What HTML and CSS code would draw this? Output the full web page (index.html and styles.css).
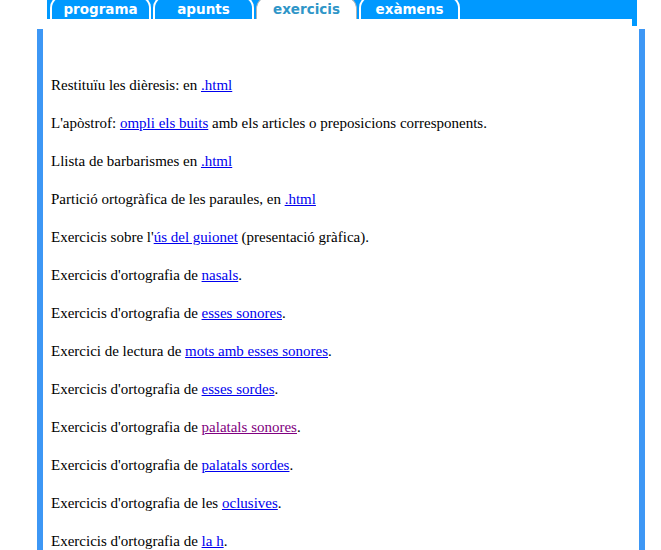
FILE: index.html
```html
<!DOCTYPE html>
<html lang="ca">
<head>
<meta charset="utf-8">
<title>exercicis</title>
<link rel="stylesheet" href="styles.css">
</head>
<body>
<div class="header">
  <nav class="topbar">
    <a class="tab">programa</a>
    <a class="tab">apunts</a>
    <a class="tab active">exercicis</a>
    <a class="tab">exàmens</a>
  </nav>
  <div class="tail"></div>
</div>
<main class="content">
  <p>Restituïu les dièresis: en <a href="#">.html</a></p>
  <p>L'apòstrof: <a href="#">ompli els buits</a> amb els articles o preposicions corresponents.</p>
  <p>Llista de barbarismes en <a href="#">.html</a></p>
  <p>Partició ortogràfica de les paraules, en <a href="#">.html</a></p>
  <p>Exercicis sobre l'<a href="#">ús del guionet</a> (presentació gràfica).</p>
  <p>Exercicis d'ortografia de <a href="#">nasals</a>.</p>
  <p>Exercicis d'ortografia de <a href="#">esses sonores</a>.</p>
  <p>Exercici de lectura de <a href="#">mots amb esses sonores</a>.</p>
  <p>Exercicis d'ortografia de <a href="#">esses sordes</a>.</p>
  <p>Exercicis d'ortografia de <a class="visited" href="#">palatals sonores</a>.</p>
  <p>Exercicis d'ortografia de <a href="#">palatals sordes</a>.</p>
  <p>Exercicis d'ortografia de les <a href="#">oclusives</a>.</p>
  <p>Exercicis d'ortografia de <a href="#">la h</a>.</p>
</main>
</body>
</html>
```
FILE: styles.css
```css
html, body {
  margin: 0;
  padding: 0;
  background: #ffffff;
}

body {
  font-family: "Liberation Serif", "Times New Roman", serif;
  font-size: 15px;
  color: #000000;
  overflow: hidden;
}

.header {
  margin-left: 47px;
  width: 590px;
  display: flex;
  flex-direction: column;
}

.topbar {
  height: 19px;
  background: #0099ff;
  display: flex;
  align-items: flex-end;
  gap: 2px;
  padding-left: 3px;
}

.tab {
  box-sizing: border-box;
  width: 101px;
  height: 24px;
  flex: none;
  border: 2px solid #ffffff;
  border-bottom: none;
  border-radius: 13px 13px 0 0;
  display: flex;
  align-items: flex-end;
  justify-content: center;
  padding-bottom: 2px;
  font-family: "DejaVu Sans", Verdana, sans-serif;
  font-weight: bold;
  font-size: 13.5px;
  line-height: 16px;
  color: #ffffff;
  text-decoration: none;
}

.tab.active {
  background: #ffffff;
  border-color: #b4b4b4;
  border-width: 1px;
  color: #2f96c8;
  height: 23px;
}

.tail {
  align-self: flex-end;
  width: 5px;
  height: 7px;
  background: #0099ff;
}

.content {
  margin: 3px 0 0 37px;
  width: 588px;
  min-height: 600px;
  border-left: 6px solid #3d97f5;
  border-right: 6px solid #3d97f5;
  padding: 45px 0 0 8px;
}

.content p {
  margin: 0 0 16px;
  line-height: 22px;
}

.content a {
  color: #0000ee;
  text-decoration: underline;
}

.content a.visited {
  color: #800080;
}
```
